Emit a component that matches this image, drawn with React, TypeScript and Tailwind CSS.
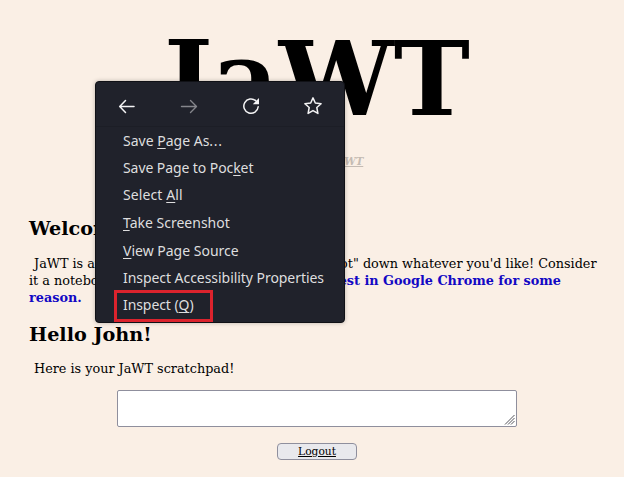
import type { ReactNode } from "react";

const K = ({ children }: { children: ReactNode }) => (
  <span className="underline decoration-1 underline-offset-2">{children}</span>
);

const Item = ({ children, className }: { children: ReactNode; className: string }) => (
  <div className={"flex h-[27px] items-center whitespace-pre pl-[27px] leading-[21px] " + className}>
    <span>{children}</span>
  </div>
);

function ContextMenu() {
  return (
    <div className="absolute left-[95px] top-[81px] h-[242px] w-[250px] rounded-[4px] border border-[#101116] bg-[#20222b] font-['Noto_Sans',sans-serif] text-[14px] text-[#dededf] shadow-[0_0_4px_rgba(0,0,0,0.25)]">
      <div className="flex h-[45px] items-center justify-around border-b border-[#1c1e26] pt-[4px]">
        <svg width="18" height="18" viewBox="0 0 18 18" fill="none" stroke="#f4f4f5" strokeWidth="1.5" strokeLinecap="round" strokeLinejoin="round">
          <path d="M16 9.5H2M7.5 3.5L1.7 9.5l5.8 6" />
        </svg>
        <svg width="18" height="18" viewBox="0 0 18 18" fill="none" stroke="#85868c" strokeWidth="1.4" strokeLinecap="round" strokeLinejoin="round">
          <path d="M1.5 9.5H16M10.5 3.5l6 6-6 6" />
        </svg>
        <svg width="18" height="18" viewBox="0 0 18 18" fill="none" stroke="#f4f4f5" strokeWidth="1.5" strokeLinecap="round">
          <path d="M13.8 3.7A7.2 7.2 0 1 0 16.2 9.8" />
          <path d="M17 1v6.2h-6.2z" fill="#f4f4f5" stroke="none" />
        </svg>
        <svg width="18" height="18" viewBox="0 0 18 18" fill="none" stroke="#f4f4f5" strokeWidth="1.5" strokeLinejoin="round">
          <path d="M9 .9l2.3 5.1 5.8.7-4.3 3.8 1.1 5.9L9 13.6l-4.9 2.8 1.1-5.9L.9 6.7 6.7 6z" />
        </svg>
      </div>
      <Item className="tracking-normal">Save <K>P</K>age As<span className="tracking-[0.7px]">...</span></Item>
      <Item className="tracking-[-0.08px]">Save Page to Poc<K>k</K>et</Item>
      <Item className="tracking-[0.1px]">Select <K>A</K>ll</Item>
      <Item className="mt-px tracking-normal"><K>T</K>ake Screenshot</Item>
      <Item className="mt-px tracking-normal"><K>V</K>iew Page Source</Item>
      <Item className="tracking-[-0.05px]">Inspect Accessibility Properties</Item>
      <Item className="tracking-[-0.08px]">Inspect (<K>Q</K>)</Item>
      <div className="absolute left-[18px] top-[208px] h-[32px] w-[99px] border-[3px] border-[#dc232d]" />
    </div>
  );
}

export default function App() {
  return (
    <div className="relative h-[477px] w-[624px] overflow-hidden bg-[#faefe5] font-['DejaVu_Serif',serif] text-[12.8px] leading-[17px] text-black">
      <main className="ml-[29px] w-[576px]">
        <h1 className="h-[153px] pt-[19px] text-center text-[102.4px] font-bold leading-[120px]">JaWT</h1>
        <p className="h-[65px] text-center text-[10.24px] font-bold italic text-[#c4bbb3]">
          powered by <span className="underline">JWT</span>
        </p>
        <h2 className="h-[37px] whitespace-nowrap text-[19.2px] font-bold leading-[22px]">Welcome to JaWT!</h2>
        <div className="h-[69px] whitespace-pre">
          <div className="pl-[5px]">{"JaWT is an online scratchpad, where you can \"jot\" down whatever you'd like! Consider"}</div>
          <div className="flex w-[532px] justify-between">
            <span>it a notebook for your</span>
            <b className="text-[#1208c4]">JaWT works best in Google Chrome for some</b>
          </div>
          <b className="text-[#1208c4]">reason.</b>
        </div>
        <h2 className="h-[36px] text-[19.2px] font-bold leading-[22px]">Hello John!</h2>
        <p className="h-[30px] whitespace-pre pl-[5px]">Here is your JaWT scratchpad!</p>
        <div className="flex flex-col items-center">
          <div className="flex h-[37px] w-[400px] items-end justify-end rounded-[2px] border border-[#8f8f9d] bg-white p-px">
            <svg width="11" height="11" viewBox="0 0 11 11" stroke="#55555a" strokeWidth="1">
              <path d="M1 10.5L10.5 1M4 10.5L10.5 4M7 10.5L10.5 7" />
            </svg>
          </div>
          <button className="mt-[16px] h-[17px] w-[80px] rounded-[4px] border border-[#8f8f9d] bg-[#e9e9ed] text-[10.67px] leading-[15px] underline">
            Logout
          </button>
        </div>
      </main>
      <ContextMenu />
    </div>
  );
}
